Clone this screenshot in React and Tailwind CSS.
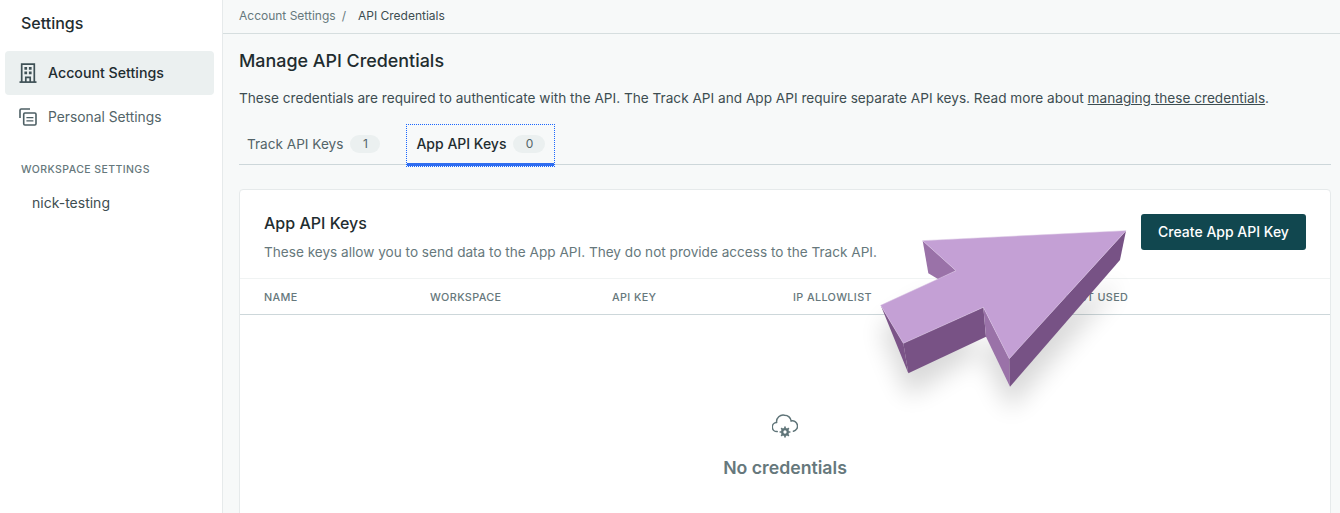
const COLUMNS = [
  { label: 'Name', width: 'w-[166px]' },
  { label: 'Workspace', width: 'w-[182px]' },
  { label: 'API Key', width: 'w-[181px]' },
  { label: 'IP Allowlist', width: 'w-[272px]' },
  { label: 'Last Used', width: '' },
];

function BuildingIcon() {
  return (
    <svg width="18" height="20" viewBox="0 0 18 20" fill="none" stroke="#3f5156" strokeWidth="1.7">
      <path d="M2.7 19V1.2h12.6V19" />
      <path d="M.5 19.1h17" />
      <path d="M6.8 19v-4.6h4.4V19" />
      <path d="M5.4 4h2.7v2.7H5.4zM9.9 4h2.7v2.7H9.9zM5.4 8.6h2.7v2.7H5.4zM9.9 8.6h2.7v2.7H9.9z" fill="#3f5156" stroke="none" />
    </svg>
  );
}

function CardsIcon() {
  return (
    <svg width="18" height="18" viewBox="0 0 18 18" fill="none" stroke="#4d5f64" strokeWidth="1.6">
      <path d="M1 10V2.2C1 1.5 1.5 1 2.2 1H11" />
      <rect x="4.7" y="5" width="12.3" height="12" rx="1.2" />
      <path d="M7.4 9.6h7M7.4 12.8h7" strokeWidth="1.3" />
    </svg>
  );
}

function CloudGearIcon() {
  return (
    <svg width="26" height="24" viewBox="0 0 26 24" fill="none" stroke="#5f7478" strokeWidth="1.5" strokeLinecap="round">
      <path d="M5.2 17.6A4.4 4.4 0 0 1 4.6 8.4 6.6 6.6 0 0 1 12.6 1.2 6.6 6.6 0 0 1 19.2 7 5.2 5.2 0 0 1 21.4 17.2" />
      <circle cx="13" cy="18" r="2.8" strokeWidth="2.3" />
      <path d="M13 12.6v2M13 21.4v2M7.6 18h2M16.4 18h2M9.2 14.2l1.4 1.4M15.4 20.4l1.4 1.4M9.2 21.8l1.4-1.4M15.4 15.6l1.4-1.4" strokeWidth="1.7" strokeLinecap="butt" />
    </svg>
  );
}

function BigArrow() {
  return (
    <svg className="absolute left-[860px] top-[200px] pointer-events-none" width="300" height="240" viewBox="0 0 900 720">
      <defs>
        <filter id="arrowShadow" x="-30%" y="-30%" width="160%" height="160%">
          <feGaussianBlur stdDeviation="36" />
        </filter>
      </defs>
      <polygon points="205,220 235,238 378,410 450,560 780,180 500,300 145,520 62,316" transform="translate(0 70)" fill="#000" opacity="0.15" filter="url(#arrowShadow)" />
      <polygon points="188,122 288,212 235,238 205,220" fill="#9a72a8" />
      <polygon points="62,316 130,430 145,520" fill="#7b5488" />
      <polygon points="130,430 370,322 378,410 145,520" fill="#785285" />
      <polygon points="370,322 448,476 450,560 378,410" fill="#9a72a8" />
      <polygon points="798,92 780,180 450,560 448,476" fill="#775285" />
      <polygon points="798,92 188,122 288,212 62,316 130,430 370,322 448,476" fill="#c4a0d5" stroke="#d9c3e2" strokeWidth="1.5" strokeLinejoin="round" />
    </svg>
  );
}

export default function App() {
  return (
    <div className="relative flex h-[513px] w-[1340px] overflow-hidden bg-[#f7f9f9] text-[#1f2d30] font-['Inter',sans-serif]">
      <aside className="w-[223px] shrink-0 border-r border-[#e6eaeb] bg-white pl-[5px] pr-[8px]">
        <div className="pl-4 pt-[14px] text-base leading-[19px] font-medium">Settings</div>
        <nav className="mt-[18px]">
          <div className="flex h-[44px] items-center gap-[11px] rounded-[4px] bg-[#ebf0f0] pl-[14px] text-[14.2px] font-medium">
            <BuildingIcon />
            Account Settings
          </div>
          <div className="flex h-[44px] items-center gap-[11px] pl-[14px] text-[13.8px] text-[#536468]">
            <CardsIcon />
            Personal Settings
          </div>
        </nav>
        <div className="mt-[24px] pl-4 text-[10.5px] leading-[14px] font-medium tracking-[0.04em] text-[#66787c]">WORKSPACE SETTINGS</div>
        <div className="mt-[17px] pl-[27px] text-sm leading-[17px] text-[#3d4d51]">nick-testing</div>
      </aside>

      <main className="min-w-0 flex-1">
        <div className="flex h-[34px] items-center gap-[6px] border-b border-[#d6dedf] pb-[2px] pl-4 text-xs text-[#66787c]">
          <span>Account Settings</span>
          <span>/</span>
          <span className="ml-[6px] text-[#3d4d51]">API Credentials</span>
        </div>

        <div className="pl-4 pr-[9px]">
          <h1 className="mt-[16px] text-[17.9px] leading-[22px] font-medium">Manage API Credentials</h1>
          <p className="mt-[17px] text-[13.63px] leading-[18px] text-[#3d4d51]">
            These credentials are required to authenticate with the API. The Track API and App API require separate API keys. Read more about <span className="underline">managing these credentials</span>.
          </p>

          <div className="mt-[15px] flex h-[43px] items-stretch border-b border-[#cdd7da]">
            <div className="flex items-center gap-[7px] pl-2 pr-[27px] pt-[2px] text-[13.6px] text-[#536468]">
              Track API Keys
              <span className="flex h-[18px] w-[30px] items-center justify-center rounded-full bg-[#ebf0f0] text-xs">1</span>
            </div>
            <div className="mt-[3px] mb-[-2px] flex items-center gap-[7px] border-b-[3px] border-[#2f6df0] pl-[9px] pr-[9px] text-sm font-medium outline-1 outline-dotted outline-[#1a66ff] outline-offset-0">
              App API Keys
              <span className="flex h-[18px] w-[32px] items-center justify-center rounded-full bg-[#ebf0f0] text-xs font-normal text-[#536468]">0</span>
            </div>
          </div>

          <section className="mt-[24px] rounded-t-[4px] border border-[#e6eaeb] bg-white">
            <div className="flex h-[89px] items-start justify-between border-b border-[#f0f3f3] pl-6 pr-6">
              <div className="pt-[23px]">
                <h2 className="text-base leading-5 font-medium">App API Keys</h2>
                <p className="mt-[10px] text-[13.6px] leading-[18px] text-[#66787c]">These keys allow you to send data to the App API. They do not provide access to the Track API.</p>
              </div>
              <button className="mt-[24px] h-[36px] w-[165px] rounded-[3px] bg-[#11474f] text-sm font-medium text-white">Create App API Key</button>
            </div>
            <div className="flex h-[36px] items-center border-b border-[#cdd7da] pl-6 pt-[3px] text-[10.8px] font-medium tracking-[0.035em] text-[#66787c] uppercase">
              {COLUMNS.map(c => <div key={c.label} className={c.width}>{c.label}</div>)}
            </div>
            <div className="flex flex-col items-center pt-[99px] pb-10">
              <CloudGearIcon />
              <div className="mt-[19px] text-[17.7px] leading-[22px] font-semibold text-[#66787c]">No credentials</div>
            </div>
          </section>
        </div>
      </main>

      <BigArrow />
    </div>
  );
}
